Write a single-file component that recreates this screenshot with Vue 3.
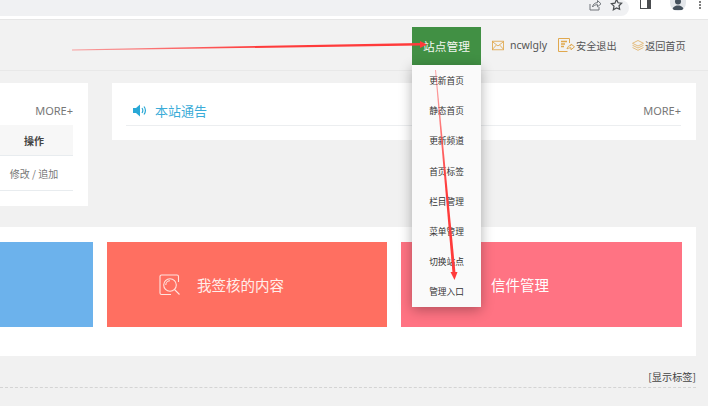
<script setup>
const menu = ['更新首页', '静态首页', '更新频道', '首页标签', '栏目管理', '菜单管理', '切换站点', '管理入口']
</script>

<template>
  <div class="page">
    <div class="browser">
      <div class="pill">
        <svg class="bi" width="14" height="14" viewBox="0 0 14 14" fill="none" stroke="#70757a" stroke-width="1"><path d="M2 6v6h9V9" /><path d="M4.500 9c.5-3 2.500-4.300 5-4.300V2.500L13 5.800 9.500 8.800V6.700C7.500 6.700 5.800 7.300 4.500 9z" /></svg>
        <svg class="bi star" width="13" height="13" viewBox="0 0 14 14" fill="none" stroke="#4a4d50" stroke-width="1.300"><path d="M7 1.500l1.700 3.600 3.800.5-2.800 2.700.7 3.900L7 10.800l-3.400 1.900.7-3.900L1.500 6.100l3.800-.5z" /></svg>
      </div>
      <div class="tools">
        <span class="side"></span>
        <span class="avatar"><svg width="16" height="16" viewBox="0 0 16 16" fill="#44505c"><circle cx="8" cy="5.500" r="3" /><path d="M2.500 14c0-3 2.500-4.500 5.500-4.500s5.500 1.500 5.500 4.500z" /></svg></span>
        <span class="dots"><i></i><i></i><i></i></span>
      </div>
    </div>

    <header class="head">
      <div class="manage">
        <div class="manage-btn">站点管理</div>
        <ul class="drop">
          <li v-for="m in menu" :key="m">{{ m }}</li>
        </ul>
      </div>
      <a class="link user">
        <svg width="14" height="11" viewBox="0 0 14 11" fill="none" stroke="#e0a84e" stroke-width="1"><rect x=".5" y=".5" width="13" height="10" /><path d="M.5 1l6.500 5 6.500-5M.5 10l4.500-5M13.500 10L9 5" /></svg>
        <span>ncwlgly</span>
      </a>
      <a class="link exit">
        <svg width="17" height="14" viewBox="0 0 17 14" fill="none" stroke="#e0a84e" stroke-width="1"><path d="M11.500 5V.5H.5v13h9" /><path d="M3 3.500h6M3 6h4M3 8.500h3" stroke-width="1.500" /><path d="M9 11c.5-2.500 2-3.500 4-3.500V6l3.500 2.800-3.500 3v-2c-1.500 0-3 .2-4 1.200z" /></svg>
        <span>安全退出</span>
      </a>
      <a class="link home">
        <svg width="12" height="11" viewBox="0 0 12 11" fill="none" stroke="#e3bb7c" stroke-width="1"><path d="M6 .5l5.500 2.800L6 6 .5 3.300z" /><path d="M.5 5.300L6 8l5.500-2.700M.5 7.500L6 10.300l5.500-2.800" /></svg>
        <span>返回首页</span>
      </a>
    </header>

    <main class="main">
      <section class="top">
        <div class="panel left">
          <div class="more-row"><span class="more">MORE+</span></div>
          <div class="th">操作</div>
          <div class="td">修改 / 追加</div>
        </div>
        <div class="panel notice">
          <div class="notice-head">
            <svg width="14" height="13" viewBox="0 0 14 13" fill="#29a8d6"><path d="M0 4h3l4-3.500v12L3 9H0z" /><path d="M9 4c1 1.500 1 3.500 0 5M11 2.500c1.800 2.500 1.800 5.500 0 8" fill="none" stroke="#29a8d6" stroke-width="1.200" /></svg>
            <h2>本站通告</h2>
            <span class="more">MORE+</span>
          </div>
        </div>
      </section>

      <section class="panel cards">
        <div class="card blue"></div>
        <div class="card red">
          <svg width="22" height="22" viewBox="0 0 22 22" fill="none" stroke="#ffe4df" stroke-width="1.100"><path d="M19.500 8V2.500a1.500 1.500 0 0 0-1.500-1.500H2.500A1.500 1.500 0 0 0 1 2.500V19a1.500 1.500 0 0 0 1.500 1.500H12" /><circle cx="11" cy="11" r="6.300" /><path d="M6.800 11A4.200 4.200 0 0 1 11 6.800M15.500 15.500l5 5" /></svg>
          <span>我签核的内容</span>
        </div>
        <div class="card pink"><span>信件管理</span></div>
      </section>

      <div class="tags">[显示标签]</div>
    </main>

    <svg class="notes" width="708" height="406" viewBox="0 0 708 406">
      <defs>
        <linearGradient id="fade1" gradientUnits="userSpaceOnUse" x1="72" y1="50" x2="260" y2="46">
          <stop offset="0" stop-color="#ff3b3b" stop-opacity=".45" />
          <stop offset="1" stop-color="#ff3b3b" />
        </linearGradient>
        <linearGradient id="fade2" gradientUnits="userSpaceOnUse" x1="435" y1="70" x2="445" y2="190">
          <stop offset="0" stop-color="#ff4a4a" stop-opacity=".45" />
          <stop offset="1" stop-color="#ff3b3b" />
        </linearGradient>
      </defs>
      <polygon points="72,49.500 420,43 420,45.500 72,50.500" fill="url(#fade1)" />
      <polygon points="420,41 427,44.500 420,48" fill="#ff3b3b" />
      <polygon points="435,70 436,70 455.500,273 452.500,273" fill="url(#fade2)" />
      <polygon points="450.500,272 457.500,272 454.500,280" fill="#ff3b3b" />
    </svg>
  </div>
</template>

<style scoped>
.page {
  position: relative;
  width: 708px;
  height: 406px;
  overflow: hidden;
  background: #f1f1f1;
  font-family: "Noto Sans CJK SC", "Noto Sans", sans-serif;
  color: #555;
}
.browser {
  display: flex;
  height: 19px;
  background: #fff;
  box-sizing: border-box;
}
.pill {
  display: flex;
  align-items: flex-start;
  justify-content: flex-end;
  gap: 8px;
  width: 629px;
  height: 16px;
  padding: 0 6px 0 0;
  box-sizing: border-box;
  background: #f0f1f3;
  border-radius: 0 10px 10px 0;
}
.bi { flex: none; margin-top: -2px; }
.tools {
  display: flex;
  align-items: flex-start;
  flex: 1;
  padding-left: 11px;
}
.side {
  width: 6px;
  height: 8px;
  border: 1px solid #4a4d50;
  border-right-width: 4px;
  border-top: 0;
}
.avatar {
  display: flex;
  justify-content: center;
  width: 16px;
  height: 11px;
  margin-left: 19px;
  background: #e3e6ea;
  border-radius: 0 0 8px 8px;
  overflow: hidden;
}
.avatar svg { margin-top: -4px; }
.dots {
  display: flex;
  flex-direction: column;
  gap: 1px;
  margin: 1px 0 0 13px;
}
.dots i {
  width: 2px;
  height: 2px;
  background: #555;
  border-radius: 50%;
}

.head {
  display: flex;
  align-items: flex-start;
  justify-content: flex-end;
  height: 52px;
  padding: 7px 22px 0 0;
  box-sizing: border-box;
  border-top: 1px solid #e6e6e6;
  border-bottom: 1px solid #e8e8e8;
  background: #f2f2f2;
}
.manage {
  position: relative;
  width: 69px;
  margin-right: 11px;
}
.manage-btn {
  height: 38px;
  padding-top: 1px;
  line-height: 36px;
  box-sizing: border-box;
  text-align: center;
  font-size: 11.700px;
  color: #f3f6f0;
  background: #419044;
}
.drop {
  position: absolute;
  z-index: 2;
  top: 38px;
  left: 0;
  width: 69px;
  height: 242px;
  margin: 0;
  padding: 1px 0 0;
  box-sizing: border-box;
  list-style: none;
  background: #fafafa;
  box-shadow: 0 3px 12px rgba(0, 0, 0, .3);
}
.drop li {
  height: 30.200px;
  line-height: 30.200px;
  text-align: center;
  font-size: 8.700px;
  color: #333;
}
.link {
  display: flex;
  align-items: center;
  flex: none;
  height: 20px;
  margin-top: 8px;
  font-size: 10.200px;
  color: #555;
  white-space: nowrap;
}
.user { width: 55px; gap: 6px; margin-right: 11px; font-size: 10.500px; font-family: "Noto Sans", sans-serif; }
.exit { width: 59px; gap: 1px; margin-right: 15px; }
.home { width: 54px; gap: 1px; }

.main { padding-right: 12px; }
.top {
  display: flex;
  align-items: flex-start;
  gap: 24px;
  margin-top: 12px;
}
.panel { background: #fff; }
.left {
  flex: none;
  width: 88px;
  height: 123px;
  padding-right: 15px;
  box-sizing: border-box;
}
.more-row {
  display: flex;
  justify-content: flex-end;
  align-items: center;
  height: 42px;
  padding-top: 13px;
  box-sizing: border-box;
}
.more {
  font-family: "Noto Sans", sans-serif;
  font-size: 11px;
  color: #777;
}
.th {
  height: 31px;
  padding-right: 5px;
  line-height: 32px;
  text-align: center;
  font-size: 10px;
  font-weight: 700;
  color: #444;
  background: #f7f7f7;
  border-bottom: 1px solid #e8ecef;
  box-sizing: border-box;
}
.td {
  height: 35px;
  padding-right: 5px;
  line-height: 35px;
  text-align: center;
  font-size: 10px;
  color: #777;
  border-bottom: 1px solid #e8ecef;
  box-sizing: border-box;
}
.notice {
  flex: 1;
  height: 57px;
  padding: 0 15px 0 14px;
}
.notice-head {
  display: flex;
  align-items: center;
  gap: 8px;
  height: 43px;
  padding: 13px 0 0 7px;
  box-sizing: border-box;
  border-bottom: 1px solid #eceef0;
}
.notice-head h2 {
  flex: 1;
  margin: 0;
  font-size: 13px;
  font-weight: 400;
  color: #3bacd8;
}
.cards {
  display: grid;
  grid-template-columns: 93px 280px 281px;
  gap: 14px;
  height: 129px;
  margin-top: 21px;
  padding-top: 15px;
  box-sizing: border-box;
}
.card {
  display: flex;
  align-items: center;
  height: 85px;
  color: #fff;
  font-size: 14.500px;
}
.blue { background: #6cb2ec; }
.red {
  gap: 16px;
  padding-left: 52px;
  background: #ff6f61;
  color: #ffeeea;
}
.pink {
  padding-left: 90px;
  background: #ff7383;
}
.tags {
  height: 19px;
  margin-top: 13px;
  line-height: 15px;
  text-align: right;
  font-size: 10.200px;
  color: #444;
  border-bottom: 1px dashed #d4d4d4;
  box-sizing: border-box;
}
.notes {
  position: absolute;
  z-index: 3;
  top: 0;
  left: 0;
  pointer-events: none;
}
</style>
